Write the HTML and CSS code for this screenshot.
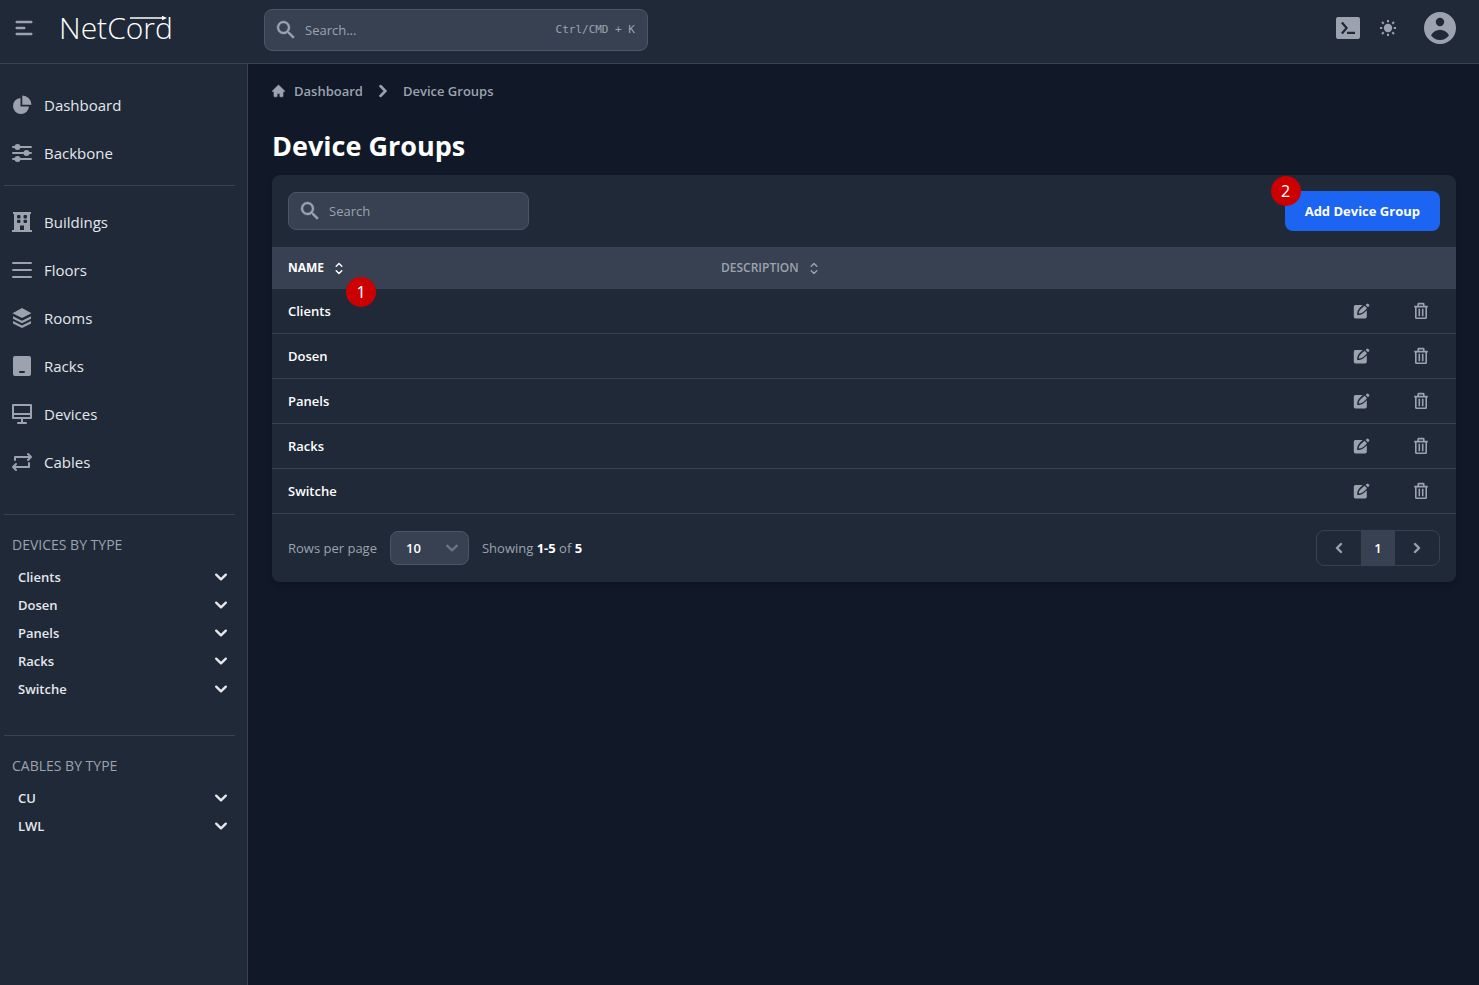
FILE: index.html
```html
<!DOCTYPE html>
<html lang="en">
<head>
<meta charset="utf-8">
<meta name="viewport" content="width=device-width, initial-scale=1">
<title>Device Groups – NetCord</title>
<link rel="stylesheet" href="styles.css">
</head>
<body>
<svg class="sprite" aria-hidden="true">
  <symbol id="search" viewBox="0 0 24 24"><path fill="currentColor" stroke="currentColor" stroke-width=".4" d="M15.5 14h-.79l-.28-.27A6.471 6.471 0 0 0 16 9.5 6.5 6.5 0 1 0 9.5 16c1.61 0 3.09-.59 4.23-1.57l.27.28v.79l5 4.99L20.49 19l-4.99-5zm-6 0C7.01 14 5 11.99 5 9.500S7.01 5 9.500 5 14 7.010 14 9.500 11.990 14 9.500 14z"/></symbol>
  <symbol id="down" viewBox="0 0 16 16"><path fill="none" stroke="currentColor" stroke-width="2.400" stroke-linecap="round" stroke-linejoin="round" d="M3.200 5.700l4.800 4.600 4.800-4.600"/></symbol>
  <symbol id="left" viewBox="0 0 20 20"><path fill="currentColor" stroke="currentColor" stroke-width=".4" d="M12.707 5.293a1 1 0 010 1.414L9.414 10l3.293 3.293a1 1 0 01-1.414 1.414l-4-4a1 1 0 010-1.414l4-4a1 1 0 011.414 0z"/></symbol>
  <symbol id="right" viewBox="0 0 20 20"><path fill="currentColor" stroke="currentColor" stroke-width=".4" d="M7.293 14.707a1 1 0 010-1.414L10.586 10 7.293 6.707a1 1 0 011.414-1.414l4 4a1 1 0 010 1.414l-4 4a1 1 0 01-1.414 0z"/></symbol>
  <symbol id="sort" viewBox="0 0 10 14"><path fill="none" stroke="currentColor" stroke-width="1.400" stroke-linecap="round" stroke-linejoin="round" d="M2.200 5.200L5 2.400l2.800 2.800M2.200 9.800L5 12.600l2.800-2.800"/></symbol>
  <symbol id="edit" viewBox="0 0 18 18"><path fill="currentColor" d="M3.500 3H10.800C7.500 5.600 5.200 8.400 5.200 11.300V13H7.200C9.900 13 12.600 10.800 14.800 8.300V14.800a1.700 1.700 0 0 1-1.700 1.700H3.500A1.700 1.700 0 0 1 1.800 14.800V4.700A1.700 1.700 0 0 1 3.500 3zM12.600 3.800l2.400 2.400C12.300 9.400 9.600 11.600 7 11.600H6.700V11.200C6.700 8.700 9.300 6.400 12.600 3.800zM13.600 2.900l1-1a1.200 1.200 0 0 1 1.700 0l.7.7a1.200 1.200 0 0 1 0 1.700l-1 1z"/></symbol>
  <symbol id="trash" viewBox="0 0 16 18"><path fill="none" stroke="currentColor" stroke-width="1.600" stroke-linejoin="round" d="M1.200 4.600h13.600M5.200 4.500V2.200a.6.6 0 0 1 .6-.6h4.400a.6.6 0 0 1 .6.600v2.300M2.800 4.800V15.500a.7.7 0 0 0 .7.700h9a.7.7 0 0 0 .7-.7V4.800M6.300 6.800v7.400M9.700 6.800v7.400"/></symbol>
</svg>

<header class="topbar">
  <div class="brand">
    <button class="icon-btn" type="button" aria-label="Toggle sidebar">
      <svg width="24" height="24" viewBox="0 0 24 24"><path fill="none" stroke="currentColor" stroke-width="2.400" stroke-linecap="round" d="M4.700 6h14.600M4.700 12h7.600M4.700 18h14.600"/></svg>
    </button>
    <a class="logo" href="#">NetCord<svg class="logo-arrow" viewBox="0 0 38 6" aria-hidden="true"><path fill="currentColor" d="M0 2.300h32V.8L37 3l-5 2.200V3.700H0z"/></svg></a>
  </div>
  <label class="field global-search">
    <svg class="icon-24"><use href="#search"/></svg>
    <input type="text" placeholder="Search..." aria-label="Search everything">
    <kbd>Ctrl/CMD + K</kbd>
  </label>
  <div class="tools">
    <button class="icon-btn" type="button" aria-label="Console">
      <svg width="24" height="24" viewBox="0 0 24 24"><path fill="currentColor" fill-rule="evenodd" d="M2 1h20a2 2 0 0 1 2 2v18a2 2 0 0 1-2 2H2a2 2 0 0 1-2-2V3a2 2 0 0 1 2-2zM5 7.200 9.200 12 5 16.800 6.800 18.300 12 12 6.800 5.700zM11 15.700h8v2.300h-8z"/></svg>
    </button>
    <button class="icon-btn" type="button" aria-label="Toggle theme">
      <svg width="16" height="16" viewBox="0 0 16 16"><circle cx="8" cy="8" r="4.200" fill="currentColor"/><path stroke="currentColor" stroke-width="2" d="M8 0v2.200M8 13.800V16M0 8h2.200M13.800 8H16M2 2l1.700 1.700M12.300 12.300L14 14M2 14l1.700-1.700M12.300 3.700L14 2"/></svg>
    </button>
    <button class="icon-btn account" type="button" aria-label="Account">
      <svg width="32" height="32" viewBox="0 0 32 32"><path fill="currentColor" fill-rule="evenodd" d="M16 0a16 16 0 1 1 0 32 16 16 0 0 1 0-32zM16 5.800a4.200 4.200 0 1 0 0 8.400 4.200 4.200 0 0 0 0-8.400zM7 23.300C9 20 12 17.800 16 17.800s7 2.200 9 5.500C23 26.200 19.800 28 16 28s-7-1.800-9-4.700z"/></svg>
    </button>
  </div>
</header>

<div class="shell">
  <aside class="sidebar">
    <nav>
      <ul class="nav">
        <li><a href="#"><svg class="icon-24" viewBox="0 0 24 24"><path fill="currentColor" d="M10.500 5A8 8 0 1 0 19 13.500H10.500zM12.300 2.500V11.700H21.500A9.200 9.200 0 0 0 12.300 2.500z"/></svg>Dashboard</a></li>
        <li><a href="#"><svg class="icon-24" viewBox="0 0 24 24"><path stroke="currentColor" stroke-width="2" stroke-linecap="round" d="M3 6h18M3 12h18M3 18h18"/><g fill="currentColor"><circle cx="7.500" cy="6" r="3"/><circle cx="16.500" cy="12" r="3"/><circle cx="7.500" cy="18" r="3"/></g></svg>Backbone</a></li>
      </ul>
      <ul class="nav">
        <li><a href="#"><svg class="icon-24" viewBox="0 0 24 24"><path fill="currentColor" fill-rule="evenodd" d="M3 2h18v2h-1v16h2v2H2v-2h2V4H3zM8 5a1 1 0 0 0-1 1v1.500a1 1 0 0 0 1 1h1.500a1 1 0 0 0 1-1V6a1 1 0 0 0-1-1zM14.500 5a1 1 0 0 0-1 1v1.500a1 1 0 0 0 1 1H16a1 1 0 0 0 1-1V6a1 1 0 0 0-1-1zM8 9.800a1 1 0 0 0-1 1V12a1 1 0 0 0 1 1h1.500a1 1 0 0 0 1-1v-1.200a1 1 0 0 0-1-1zM14.500 9.800a1 1 0 0 0-1 1V12a1 1 0 0 0 1 1H16a1 1 0 0 0 1-1v-1.200a1 1 0 0 0-1-1zM10 15.500V20h4v-4.500z"/></svg>Buildings</a></li>
        <li><a href="#"><svg class="icon-24" viewBox="0 0 24 24"><path stroke="currentColor" stroke-width="2" stroke-linecap="round" d="M3 5h18M3 12h18M3 19h18"/></svg>Floors</a></li>
        <li><a href="#"><svg class="icon-24" viewBox="0 0 24 24"><path fill="currentColor" d="M12 2l9.500 5.200L12 12 2.500 7.200zM3 10.300l9 4.500 9-4.500v2.400L12 17.200l-9-4.500zM3 15l9 4.500 9-4.500v2.400L12 22l-9-4.600z"/></svg>Rooms</a></li>
        <li><a href="#"><svg class="icon-24" viewBox="0 0 24 24"><path fill="currentColor" fill-rule="evenodd" d="M5 2h14a2 2 0 0 1 2 2v16a2 2 0 0 1-2 2H5a2 2 0 0 1-2-2V4a2 2 0 0 1 2-2zM10 17a1 1 0 0 0 0 2h4a1 1 0 0 0 0-2z"/></svg>Racks</a></li>
        <li><a href="#"><svg class="icon-24" viewBox="0 0 24 24"><path fill="none" stroke="currentColor" stroke-width="2" stroke-linecap="round" stroke-linejoin="round" d="M3 3h18v13H3zM3 12h18M12 16v5M8 21h8"/></svg>Devices</a></li>
        <li><a href="#"><svg class="icon-24" viewBox="0 0 24 24"><path fill="none" stroke="currentColor" stroke-width="2" stroke-linecap="round" stroke-linejoin="round" d="M5 10V7h16M18 4l3 3-3 3M19 13v4H3M6 14l-3 3 3 3"/></svg>Cables</a></li>
      </ul>
    </nav>
    <section class="group">
      <h2>Devices by type</h2>
      <ul>
        <li><button type="button">Clients<svg><use href="#down"/></svg></button></li>
        <li><button type="button">Dosen<svg><use href="#down"/></svg></button></li>
        <li><button type="button">Panels<svg><use href="#down"/></svg></button></li>
        <li><button type="button">Racks<svg><use href="#down"/></svg></button></li>
        <li><button type="button">Switche<svg><use href="#down"/></svg></button></li>
      </ul>
    </section>
    <section class="group">
      <h2>Cables by type</h2>
      <ul>
        <li><button type="button">CU<svg><use href="#down"/></svg></button></li>
        <li><button type="button">LWL<svg><use href="#down"/></svg></button></li>
      </ul>
    </section>
  </aside>

  <main class="content">
    <nav class="crumbs" aria-label="Breadcrumb">
      <a href="#"><svg class="home" viewBox="0 0 20 20"><path fill="currentColor" stroke="currentColor" stroke-width=".8" d="M10.707 1.293a1 1 0 00-1.414 0l-8.500 8.500a1 1 0 001.414 1.414L3 10.414V18a1 1 0 001 1h3a1 1 0 001-1v-3a1 1 0 011-1h2a1 1 0 011 1v3a1 1 0 001 1h3a1 1 0 001-1v-7.586l.793.793a1 1 0 001.414-1.414z"/></svg>Dashboard</a>
      <svg class="icon-24"><use href="#right"/></svg>
      <a href="#">Device Groups</a>
    </nav>
    <h1>Device Groups</h1>

    <section class="card">
      <div class="card-top">
        <label class="field table-search">
          <svg class="icon-24"><use href="#search"/></svg>
          <input type="text" placeholder="Search" aria-label="Search device groups">
        </label>
        <div class="add">
          <button class="primary" type="button">Add Device Group</button>
          <span class="marker marker-add">2</span>
        </div>
      </div>

      <table>
        <thead>
          <tr>
            <th class="col-name"><div class="anchor"><button class="active" type="button">Name<svg><use href="#sort"/></svg></button><span class="marker marker-sort">1</span></div></th>
            <th><button type="button">Description<svg><use href="#sort"/></svg></button></th>
            <th class="col-edit"></th>
            <th class="col-trash"></th>
          </tr>
        </thead>
        <tbody>
          <tr><td>Clients</td><td></td><td><button type="button" aria-label="Edit Clients"><svg><use href="#edit"/></svg></button></td><td><button type="button" aria-label="Delete Clients"><svg><use href="#trash"/></svg></button></td></tr>
          <tr><td>Dosen</td><td></td><td><button type="button" aria-label="Edit Dosen"><svg><use href="#edit"/></svg></button></td><td><button type="button" aria-label="Delete Dosen"><svg><use href="#trash"/></svg></button></td></tr>
          <tr><td>Panels</td><td></td><td><button type="button" aria-label="Edit Panels"><svg><use href="#edit"/></svg></button></td><td><button type="button" aria-label="Delete Panels"><svg><use href="#trash"/></svg></button></td></tr>
          <tr><td>Racks</td><td></td><td><button type="button" aria-label="Edit Racks"><svg><use href="#edit"/></svg></button></td><td><button type="button" aria-label="Delete Racks"><svg><use href="#trash"/></svg></button></td></tr>
          <tr><td>Switche</td><td></td><td><button type="button" aria-label="Edit Switche"><svg><use href="#edit"/></svg></button></td><td><button type="button" aria-label="Delete Switche"><svg><use href="#trash"/></svg></button></td></tr>
        </tbody>
      </table>

      <div class="card-foot">
        <div class="paging">
          <label for="rows">Rows per page</label>
          <span class="select">
            <select id="rows"><option>10</option><option>25</option><option>50</option></select>
            <svg><use href="#down"/></svg>
          </span>
          <span>Showing <b>1-5</b> of <b>5</b></span>
        </div>
        <nav class="pager" aria-label="Pages">
          <button type="button" aria-label="Previous page"><svg><use href="#left"/></svg></button>
          <button class="current" type="button">1</button>
          <button type="button" aria-label="Next page"><svg><use href="#right"/></svg></button>
        </nav>
      </div>
    </section>
  </main>
</div>
</body>
</html>
```
FILE: styles.css
```css
:root {
  --bg: #111827;
  --panel: #1f2937;
  --raised: #374151;
  --line: #374151;
  --edge: #4b5563;
  --muted: #9ca3af;
  --text: #e5e7eb;
}
* { box-sizing: border-box; }
body {
  margin: 0;
  min-height: 100vh;
  display: flex;
  flex-direction: column;
  background: var(--bg);
  color: var(--muted);
  font: 13px/20px "Open Sans", "Noto Sans", sans-serif;
}
button, input, select {
  font: inherit;
  color: inherit;
  border: 0;
  padding: 0;
  background: none;
}
button { cursor: pointer; }
a { color: inherit; text-decoration: none; }
ul { list-style: none; margin: 0; padding: 0; }
h1, h2 { margin: 0; }
svg { flex: none; display: block; }
.sprite { position: absolute; width: 0; height: 0; }
.icon-24 { width: 24px; height: 24px; }

/* Top bar */
.topbar {
  display: flex;
  height: 64px;
  padding-bottom: 7px;
  align-items: center;
  background: var(--panel);
  border-bottom: 1px solid var(--line);
}
.brand { width: 264px; padding-left: 12px; display: flex; align-items: center; gap: 23px; }
.icon-btn { display: flex; }
.logo { position: relative; color: #fff; font-size: 30px; line-height: 40px; font-weight: 300; }
.logo-arrow { position: absolute; left: 71px; top: 7px; width: 38px; height: 6px; }
.field {
  display: flex;
  align-items: center;
  gap: 7px;
  padding: 0 12px 0 9px;
  background: var(--raised);
  border: 1px solid var(--edge);
  border-radius: 8px;
}
.field input { flex: 1; min-width: 0; outline: 0; }
.field input::placeholder { color: var(--muted); opacity: 1; }
.global-search { width: 384px; height: 42px; margin-top: 3px; }
kbd { font: 11px/16px "DejaVu Sans Mono", monospace; }
.tools { margin-left: auto; padding-right: 23px; display: flex; align-items: center; gap: 20px; }
.account { margin-left: 8px; }

/* Sidebar */
.shell { flex: 1; display: flex; }
.sidebar {
  flex: none;
  width: 248px;
  padding: 17px 12px 16px 4px;
  background: var(--panel);
  border-right: 1px solid var(--line);
}
.nav a {
  display: flex;
  align-items: center;
  gap: 10px;
  height: 48px;
  padding-left: 6px;
  color: var(--text);
  font-size: 15px;
}
.nav svg { color: var(--muted); }
.nav + .nav { margin-top: 8px; padding-top: 12px; border-top: 1px solid var(--line); }
.group { margin-top: 28px; padding-top: 20px; border-top: 1px solid var(--line); }
.group h2 { padding-left: 8px; margin-bottom: 8px; font-size: 14px; line-height: 20px; font-weight: 400; text-transform: uppercase; }
.group button {
  width: 100%;
  height: 28px;
  padding: 0 6px 0 14px;
  display: flex;
  align-items: center;
  justify-content: space-between;
  color: var(--text);
  font-weight: 600;
}
.group button svg { width: 16px; height: 16px; }
.group + .group { margin-top: 32px; }

/* Content */
.content { flex: 1; min-width: 0; padding: 15px 23px 24px 24px; }
.crumbs, .crumbs a { display: flex; align-items: center; font-weight: 600; }
.crumbs { gap: 8px; }
.crumbs a { gap: 9px; }
.home { width: 13px; height: 14px; }
h1 { margin: 22px 0 8px; color: #fff; font-size: 27px; line-height: 42px; font-weight: 700; }
.card { background: var(--panel); border-radius: 8px; box-shadow: 0 4px 6px rgb(0 0 0 / 15%); }
.card-top { display: flex; align-items: center; justify-content: space-between; padding: 16px; }
.table-search { width: 241px; height: 38px; }
.primary {
  height: 40px;
  padding: 0 20px;
  border-radius: 8px;
  background: #1c64f2;
  color: #fff;
  font-weight: 700;
}
.add, .anchor { position: relative; }
.marker {
  position: absolute;
  width: 30px;
  height: 30px;
  border-radius: 50%;
  background: #cc0000;
  color: #fff;
  font: 16px/30px "Noto Sans", sans-serif;
  text-align: center;
}
.marker-add { left: -14px; top: -15px; }
.marker-sort { left: 58px; top: 19px; }

table { width: 100%; border-spacing: 0; table-layout: fixed; }
th, td { padding: 0 16px; text-align: left; }
th { height: 42px; background: var(--raised); }
.col-name { width: 433px; }
.col-edit { width: 60px; }
.col-trash { width: 44px; }
th button {
  display: flex;
  align-items: center;
  gap: 10px;
  font-size: 12px;
  font-weight: 600;
  text-transform: uppercase;
}
th button.active { color: #fff; font-weight: 700; }
th svg { width: 10px; height: 14px; }
td { height: 45px; border-bottom: 1px solid var(--line); color: #fff; font-weight: 600; }
th:nth-child(n+3), td:nth-child(n+3) { padding: 0; }
td button { display: flex; color: var(--muted); }
td svg { width: 18px; height: 18px; }

.card-foot { display: flex; align-items: center; justify-content: space-between; padding: 16px; }
.paging { display: flex; align-items: center; gap: 13px; }
.paging b { color: #fff; font-weight: 700; }
.select { display: grid; align-items: center; }
.select > * { grid-area: 1 / 1; }
select {
  appearance: none;
  width: 79px;
  height: 34px;
  padding: 0 32px 0 15px;
  background: var(--raised);
  border: 1px solid var(--edge);
  border-radius: 8px;
  color: #fff;
  font-weight: 600;
}
.select svg { width: 16px; height: 16px; margin-right: 9px; justify-self: end; color: #6b7280; pointer-events: none; }
.pager { display: flex; border: 1px solid var(--line); border-radius: 8px; overflow: hidden; }
.pager button { width: 44px; height: 34px; display: flex; align-items: center; justify-content: center; }
.pager svg { width: 20px; height: 20px; }
.pager .current { width: 34px; background: var(--raised); color: #fff; font-weight: 600; }
```
